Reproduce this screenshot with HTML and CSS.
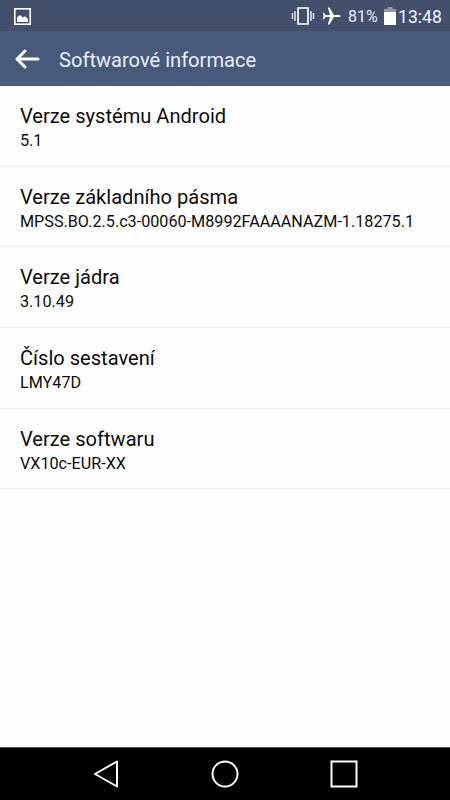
FILE: index.html
```html
<!DOCTYPE html>
<html lang="cs">
<head>
<meta charset="utf-8">
<title>Softwarové informace</title>
<link rel="stylesheet" href="styles.css">
</head>
<body>
<div class="screen">
  <div class="status">
    <svg class="picture" width="17" height="17" viewBox="0 0 17 17"><rect x=".8" y=".8" width="15.4" height="15.4" fill="none" stroke="#fff" stroke-width="1.6"/><path d="M3 14V9.500L5 7.500L7 7.500L8.500 9.500L11 8.300L14 11V14Z" fill="#fff"/></svg>
    <svg class="vibrate" width="24" height="18" viewBox="0 0 24 18"><path d="M7 1H17V17H7Z" fill="none" stroke="#fff" stroke-width="1.7"/><path d="M4 4V14M20 4V14M1.500 6V12M22.500 6V12" stroke="#fff" stroke-width="1.300"/></svg>
    <svg class="plane" width="19" height="20" viewBox="0 0 19 20"><path d="M18.500 10C18.500 9.300 17.800 8.900 17 8.900H12L7.400 1.500H5.800L8 8.900H3.600L2 6.800H.8L1.600 10L.8 13.200H2L3.600 11.100H8L5.800 18.500H7.400L12 11.100H17C17.800 11.100 18.500 10.700 18.500 10Z" fill="#fff"/></svg>
    <span class="percent">81%</span>
    <svg class="battery" width="12" height="18" viewBox="0 0 12 18"><path d="M3.500 0H8.500V2H12V5H0V2H3.500Z" fill="#929aaa"/><path d="M0 5H12V18H0Z" fill="#fff"/></svg>
    <span class="time">13:48</span>
  </div>
  <header class="header">
    <svg class="back" width="25" height="20" viewBox="0 0 25 20"><path d="M10 2L2 10L10 18M2.500 10H23" fill="none" stroke="#fff" stroke-width="3" stroke-linecap="round" stroke-linejoin="round"/></svg>
    <h1 class="heading">Softwarové informace</h1>
  </header>
  <main class="list">
    <section class="row"><h2 class="title">Verze systému Android</h2><p class="value">5.1</p></section>
    <section class="row"><h2 class="title">Verze základního pásma</h2><p class="value">MPSS.BO.2.5.c3-00060-M8992FAAAANAZM-1.18275.1</p></section>
    <section class="row"><h2 class="title">Verze jádra</h2><p class="value">3.10.49</p></section>
    <section class="row"><h2 class="title">Číslo sestavení</h2><p class="value">LMY47D</p></section>
    <section class="row"><h2 class="title">Verze softwaru</h2><p class="value">VX10c-EUR-XX</p></section>
  </main>
  <nav class="nav">
    <svg width="28" height="28" viewBox="0 0 28 28"><path d="M3 14L25 1.500V26.500Z" fill="none" stroke="#fff" stroke-width="2" stroke-linejoin="round"/></svg>
    <svg width="28" height="28" viewBox="0 0 28 28"><circle cx="14" cy="14" r="12.500" fill="none" stroke="#fff" stroke-width="2"/></svg>
    <svg width="28" height="28" viewBox="0 0 28 28"><rect x="1.500" y="1.500" width="25" height="25" fill="none" stroke="#fff" stroke-width="2"/></svg>
  </nav>
</div>
</body>
</html>
```
FILE: styles.css
```css
* { box-sizing: border-box; }
body { margin: 0; font-family: Roboto, sans-serif; color: #0c0c0c; }
h1, h2, p { margin: 0; font-weight: 400; white-space: nowrap; }
svg { display: block; flex: none; }
.screen { width: 450px; height: 800px; display: flex; flex-direction: column; background: #fefefe; overflow: hidden; }
.status { height: 31px; flex: none; display: flex; align-items: center; padding: 1px 9px 0 14px; background: #42506e; color: #fff; }
.vibrate { margin-left: auto; }
.plane { margin-left: 7px; }
.percent { font-size: 16px; line-height: 20px; width: 30px; margin: 1px 0 0 7px; white-space: nowrap; color: #e8edf8; }
.battery { margin-left: 6px; }
.time { font-size: 17.6px; line-height: 20px; width: 43px; margin: 1px 0 0 2px; white-space: nowrap; color: #f0f4fc; }
.header { height: 55px; flex: none; display: flex; align-items: center; padding-left: 15px; background: #475a7c; }
.heading { margin: 3px 0 0 19px; font-size: 20.1px; line-height: 24px; color: #e9effb; }
.back { margin-top: 1px; }
.list { flex: 1; }
.row { height: 80.7px; padding: 18px 20px 0; border-bottom: 1px solid #ebebeb; }
.title { font-size: 20.08px; line-height: 25px; }
.value { font-size: 16.18px; line-height: 22px; margin-top: 1px; }
.nav { height: 53px; flex: none; display: flex; justify-content: space-between; align-items: center; padding: 0 92px; background: #000; border-top: 1px solid #555; }
```
